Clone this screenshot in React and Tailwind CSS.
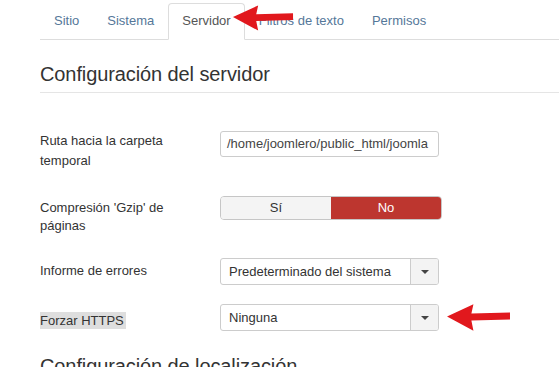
import React from 'react';

const tabs = ['Sitio', 'Sistema', 'Servidor', 'Filtros de texto', 'Permisos'];

function Arrow({ className }) {
  return (
    <svg className={className} viewBox="0 0 64 28" fill="none">
      <path d="M1 13 L27 1 L25 10 L63 9 L63 16 L25 17 L27 27 Z" fill="#e1181d" />
    </svg>
  );
}

function Select({ value }) {
  return (
    <div className="flex h-[27px] w-[219px] overflow-hidden rounded-[3px] border border-[#cccccc] bg-white">
      <div className="flex flex-1 items-center px-[8px] text-[13px] text-[#333]">{value}</div>
      <div className="flex w-[28px] items-center justify-center border-l border-[#cccccc] bg-[#f3f3f3]">
        <span className="block h-0 w-0 border-x-[4px] border-t-[4px] border-x-transparent border-t-[#444]" />
      </div>
    </div>
  );
}

export default function App() {
  return (
    <div
      className="relative h-[367px] w-[559px] overflow-hidden bg-white pl-[40px] text-[#333]"
      style={{ fontFamily: '"Liberation Sans", Arial, sans-serif' }}
    >
      <div className="flex border-b border-[#dddddd] pt-[3px]">
        {tabs.map((tab) => (
          <div
            key={tab}
            className={
              tab === 'Servidor'
                ? '-mb-px rounded-t-[4px] border border-[#dddddd] border-b-white bg-white px-[13px] pb-[8px] pt-[8px] text-[13px] leading-[18px] text-[#555]'
                : 'border border-transparent px-[13px] pb-[8px] pt-[8px] text-[13px] leading-[18px] text-[#557799]'
            }
          >
            {tab}
          </div>
        ))}
      </div>

      <h2 className="mt-[22px] border-b border-[#e5e5e5] pb-[6px] text-[20px] leading-[24px] font-normal tracking-[-0.1px] text-[#333]">
        Configuración del servidor
      </h2>

      <div className="mt-[38px] flex">
        <div className="w-[180px] text-[13px] leading-[20px]">
          Ruta hacia la carpeta
          <br />
          temporal
        </div>
        <div className="flex h-[26px] w-[219px] items-center overflow-hidden rounded-[3px] border border-[#cccccc] px-[6px] text-[13px] whitespace-nowrap text-[#444]">
          /home/joomlero/public_html/joomla
        </div>
      </div>

      <div className="mt-[25px] flex">
        <div className="mt-[3px] w-[180px] text-[13px] leading-[18px]">
          Compresión 'Gzip' de
          <br />
          páginas
        </div>
        <div className="flex h-[24px] w-[222px] overflow-hidden rounded-[4px] border border-[#c6c6c6] text-[13px]">
          <div className="flex flex-1 items-center justify-center bg-[#f4f4f4] text-[#333]">Sí</div>
          <div className="flex flex-1 items-center justify-center bg-[#bd362f] text-white">No</div>
        </div>
      </div>

      <div className="mt-[23px] flex">
        <div className="mt-[3px] w-[180px] text-[13px] leading-[20px]">Informe de errores</div>
        <Select value="Predeterminado del sistema" />
      </div>

      <div className="mt-[19px] flex">
        <div className="w-[180px] pt-[4px]">
          <span className="bg-[#dedede] py-[1px] pr-[2px] text-[13px] leading-[18px]">Forzar HTTPS</span>
        </div>
        <Select value="Ninguna" />
      </div>

      <h2 className="mt-[22px] text-[20px] leading-[24px] font-normal tracking-[-0.1px] text-[#333]">
        Configuración de localización
      </h2>

      <Arrow className="absolute left-[232px] top-[4px] h-[28px] w-[62px]" />
      <Arrow className="absolute left-[446px] top-[302px] h-[31px] w-[65px]" />
    </div>
  );
}
